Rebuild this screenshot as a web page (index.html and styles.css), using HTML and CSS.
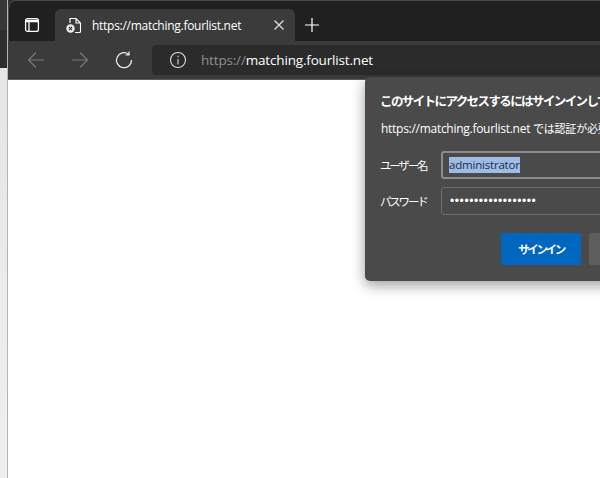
FILE: index.html
```html
<!DOCTYPE html>
<html lang="ja">
<head>
<meta charset="utf-8">
<title>https://matching.fourlist.net</title>
<link rel="stylesheet" href="styles.css">
</head>
<body>
<div class="desk"></div>
<div class="browser">
  <div class="tabstrip">
    <button class="tab-actions">
      <svg width="16" height="16" viewBox="0 0 16 16" fill="none" stroke="#fff" stroke-width="1.300"><rect x="1.600" y="1.600" width="12.800" height="12.800" rx="2"/><path d="M1.600 3.500h12.800M1.600 4.500h12.800M5 4.500v9.900"/></svg>
    </button>
    <div class="tab">
      <svg class="tab-icon" width="18" height="18" viewBox="0 0 18 18" fill="none"><path d="M5 7V2.500h6l4.500 4.500v8.500a1 1 0 0 1-1 1H10M11 2.500V7h4.500" stroke="#fff" stroke-width="1.100"/><circle cx="5.500" cy="12.500" r="4.200" fill="#eee"/><path d="M3.900 10.900l3.200 3.200M7.100 10.900l-3.200 3.200" stroke="#333" stroke-width="1.200"/></svg>
      <span class="tab-title">https://matching.fourlist.net</span>
      <svg width="12" height="12" viewBox="0 0 12 12" stroke="#ddd" stroke-width="1.300"><path d="M1.500 1.500l9 9M10.500 1.500l-9 9"/></svg>
    </div>
    <button class="new-tab">
      <svg width="16" height="16" viewBox="0 0 16 16" stroke="#fff" stroke-width="1.200"><path d="M8 1v14M1 8h14"/></svg>
    </button>
  </div>
  <div class="toolbar">
    <button class="tool">
      <svg width="18" height="18" viewBox="0 0 18 18" fill="none" stroke="#787878" stroke-width="1.200"><path d="M17 9H1.500M9 1.500L1.500 9 9 16.500"/></svg>
    </button>
    <button class="tool">
      <svg width="18" height="18" viewBox="0 0 18 18" fill="none" stroke="#787878" stroke-width="1.200"><path d="M1 9h15.500M9 1.500L16.500 9 9 16.500"/></svg>
    </button>
    <button class="tool">
      <svg width="18" height="18" viewBox="0 0 18 18" fill="none" stroke="#eee" stroke-width="1.200"><path d="M13.500 3.200A7.500 7.500 0 1 0 16.500 9M14 0.500v3.500h-3.500"/></svg>
    </button>
    <div class="address">
      <svg width="18" height="18" viewBox="0 0 18 18" fill="none" stroke="#ddd" stroke-width="1.100"><circle cx="9" cy="9" r="7.500"/><path d="M9 8v5.500M9 4.800v1.400"/></svg>
      <span class="url"><span class="url-scheme">https://</span>matching.fourlist.net</span>
    </div>
  </div>
  <div class="page"></div>
</div>
<div class="dialog">
  <div class="dialog-title">このサイトにアクセスするにはサインインしてください</div>
  <div class="dialog-text">https://matching.fourlist.net <span class="kana">では認証が必要です</span></div>
  <div class="field">
    <span class="field-label">ユーザー名</span>
    <div class="field-box focus"><span class="selected">administrator</span></div>
  </div>
  <div class="field">
    <span class="field-label">パスワード</span>
    <div class="field-box"><span class="dots">••••••••••••••••••</span></div>
  </div>
  <div class="dialog-buttons">
    <button class="btn primary">サインイン</button>
    <button class="btn">キャンセル</button>
  </div>
</div>
</body>
</html>
```
FILE: styles.css
```css
html, body {
  margin: 0;
  height: 100%;
  overflow: hidden;
}

body {
  display: flex;
  background: #2e2e2e;
  font-family: "Open Sans", "Noto Sans CJK JP", sans-serif;
  color: #fff;
}

button {
  border: 0;
  background: none;
  padding: 0;
  font-family: inherit;
  color: inherit;
}

.desk {
  width: 7px;
  border-right: 1px solid #b5b5b5;
  background: linear-gradient(#383838 0, #383838 30px, #2e2e2e 30px, #2e2e2e 68px, #e6e6e6 68px, #efefef 100%);
}

.browser {
  flex: 1;
  display: flex;
  flex-direction: column;
  min-width: 0;
}

.tabstrip {
  height: 41px;
  box-sizing: border-box;
  border-top: 1px solid #4a4a4a;
  border-left: 1px solid #4a4a4a;
  border-top-left-radius: 8px;
  background: #202020;
  display: flex;
  align-items: flex-end;
}

.tab-actions {
  width: 46px;
  height: 32px;
  display: flex;
  align-items: center;
  justify-content: center;
}

.tab {
  width: 240px;
  height: 32px;
  box-sizing: border-box;
  padding: 0 10px;
  background: #3b3b3b;
  border-radius: 6px 6px 0 0;
  display: flex;
  align-items: center;
}

.tab-icon {
  flex: none;
}

.tab-title {
  flex: 1;
  margin-left: 9px;
  font-size: 12px;
  letter-spacing: -.28px;
  white-space: nowrap;
}

.new-tab {
  width: 34px;
  height: 32px;
  display: flex;
  align-items: center;
  justify-content: center;
}

.toolbar {
  height: 38px;
  background: #3b3b3b;
  border-bottom: 1px solid #5a5a5a;
  display: flex;
  align-items: center;
  padding-left: 6px;
}

.tool {
  width: 44px;
  height: 30px;
  display: flex;
  align-items: center;
  justify-content: center;
}

.address {
  flex: 1;
  height: 30px;
  margin-left: 6px;
  padding-left: 17px;
  background: #2b2b2b;
  border-radius: 4px 0 0 4px;
  display: flex;
  align-items: center;
  gap: 14px;
}

.url {
  font-size: 13.500px;
  letter-spacing: -.17px;
  white-space: nowrap;
}

.url-scheme {
  color: #8f8f8f;
}

.page {
  flex: 1;
  background: #fff;
}

/* auth popup lies over the toolbar and the page */
.dialog {
  position: absolute;
  left: 365px;
  top: 77px;
  width: 420px;
  height: 204px;
  box-sizing: border-box;
  padding: 16px 16px 0;
  background: #4a4a4a;
  border-radius: 5px;
  box-shadow: 0 4px 14px rgba(0, 0, 0, .4);
}

.dialog-title {
  margin-left: -1px;
  font-size: 12.500px;
  font-weight: 700;
  letter-spacing: -1.600px;
  line-height: 18px;
  white-space: nowrap;
}

.dialog-text {
  margin-top: 9px;
  font-size: 12px;
  letter-spacing: -.28px;
  line-height: 18px;
  white-space: nowrap;
}

.kana {
  font-size: 11px;
  letter-spacing: -.2px;
}

.field {
  display: flex;
  align-items: center;
  margin-top: 8px;
  font-size: 12px;
}

.dialog-text + .field {
  margin-top: 13px;
}

.field-label {
  width: 61px;
  margin-left: -1px;
  flex: none;
  font-size: 11.500px;
  letter-spacing: -2.200px;
}

.field-box {
  flex: 1;
  height: 28px;
  box-sizing: border-box;
  border: 1px solid #6c6c6c;
  border-radius: 3px;
  padding-left: 8px;
  display: flex;
  align-items: center;
}

.field-box.focus {
  border: 2px solid #8c8c8c;
  padding-left: 6px;
}

.selected {
  background: #9dbde8;
  color: #26303f;
  line-height: 16px;
  font-size: 11.500px;
  letter-spacing: -.2px;
}

.dots {
  font-family: "Liberation Sans", sans-serif;
  font-size: 12px;
  letter-spacing: .6px;
}

.dialog-buttons {
  display: flex;
  gap: 8px;
  margin-top: 18px;
  padding-left: 120px;
}

.btn {
  width: 80px;
  height: 32px;
  background: #5e5e5e;
  border-radius: 2px;
  font-size: 11.500px;
  font-weight: 700;
  letter-spacing: -2.400px;
}

.btn.primary {
  background: #0067c0;
}
```
